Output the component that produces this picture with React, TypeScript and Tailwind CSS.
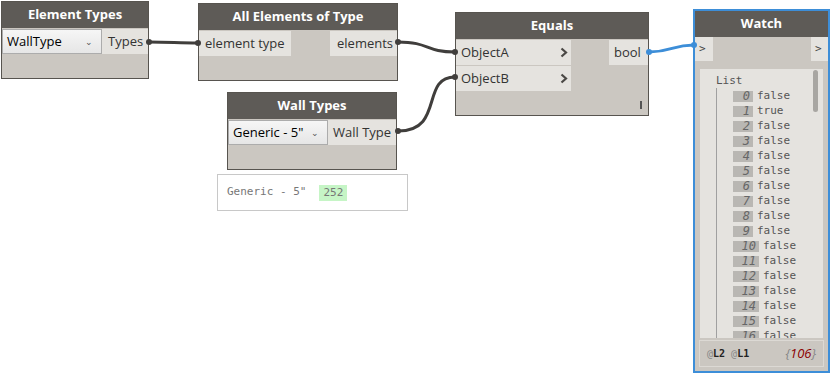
import { ReactNode } from "react";

const ui = { fontFamily: '"Open Sans", "Noto Sans", sans-serif' };
const mono = { fontFamily: '"DejaVu Sans Mono", "Liberation Mono", monospace' };

function Node({ title, className, children }: { title: string; className: string; children: ReactNode }) {
    return (
        <div className={`absolute flex flex-col border border-[#57544f] bg-[#cbc7c1] ${className}`}>
            <div className="h-[26px] shrink-0 bg-[#5e5b57] text-white font-bold text-[13px] flex items-center justify-center">{title}</div>
            {children}
        </div>
    );
}

function Dropdown({ value, width }: { value: string; width: string }) {
    return (
        <div className={`${width} h-[25px] flex items-center justify-between pl-[4px] pr-[8px] border border-[#acacac] bg-gradient-to-b from-[#f6f6f6] to-[#e6e6e6] text-[13px] text-black`}>
            <span>{value}</span>
            <span className="text-[9px] text-[#555]">&#8964;</span>
        </div>
    );
}

function Chevron() {
    return (
        <svg width="8" height="11" viewBox="0 0 8 11">
            <polyline points="1.5,1.5 6,5.5 1.5,9.5" fill="none" stroke="#4a4845" strokeWidth="2.2" />
        </svg>
    );
}

const items = ["false", "true", ...Array.from({ length: 15 }, () => "false")];

export default function App() {
    return (
        <div className="relative w-[830px] h-[376px] bg-white overflow-hidden text-[#333]" style={ui}>
            <Node title="Element Types" className="left-[1px] top-[1px] w-[148px] h-[78px]">
                <div className="flex h-[25px] mt-[1px]">
                    <Dropdown value="WallType" width="w-[100px]" />
                    <div className="flex-1 bg-[#e5e3df] text-[13px] flex items-center pl-[6px]">Types</div>
                </div>
            </Node>

            <Node title="All Elements of Type" className="left-[198px] top-[3px] w-[200px] h-[78px]">
                <div className="flex justify-between h-[25px] mt-[1px]">
                    <div className="w-[92px] bg-[#e5e3df] text-[13px] flex items-center pl-[6px]">element type</div>
                    <div className="w-[67px] bg-[#e5e3df] text-[13px] flex items-center pl-[7px]">elements</div>
                </div>
            </Node>

            <Node title="Wall Types" className="left-[227px] top-[92px] w-[170px] h-[78px]">
                <div className="flex h-[25px] mt-[1px]">
                    <Dropdown value={'Generic - 5"'} width="w-[100px]" />
                    <div className="flex-1 bg-[#e5e3df] text-[13px] flex items-center pl-[5px]">Wall Type</div>
                </div>
            </Node>

            <div className="absolute left-[217px] top-[174px] w-[191px] h-[37px] border border-[#c8c8c8] bg-white flex items-center pl-[9px] text-[11px] text-[#777]" style={mono}>
                <span>Generic - 5"</span>
                <span className="ml-[13px] px-[4px] bg-[#c6f5c6] leading-[16px]">252</span>
            </div>

            <Node title="Equals" className="left-[455px] top-[12px] w-[194px] h-[104px]">
                <div className="flex justify-between flex-1">
                    <div className="w-[115px] flex flex-col gap-[1px] pt-[1px]">
                        {["ObjectA", "ObjectB"].map((p) => (
                            <div key={p} className="h-[25px] bg-[#e5e3df] text-[13px] flex items-center justify-between pl-[5px] pr-[3px]">
                                <span>{p}</span>
                                <Chevron />
                            </div>
                        ))}
                    </div>
                    <div className="flex flex-col justify-between items-end pt-[1px] pb-[6px]">
                        <div className="w-[39px] h-[25px] bg-[#e5e3df] text-[13px] flex items-center pl-[5px]">bool</div>
                        <div className="w-[2px] h-[8px] bg-[#555] mr-[6px]" />
                    </div>
                </div>
            </Node>

            <div className="absolute left-[693px] top-[9px] w-[137px] h-[364px] border-2 border-[#3d8ed8] bg-[#cbc7c1] flex flex-col">
                <div className="h-[26px] shrink-0 bg-[#5e5b57] text-white font-bold text-[13px] flex items-center justify-center">Watch</div>
                <div className="flex justify-between h-[24px] shrink-0 text-[11px] text-[#444]" style={mono}>
                    <div className="w-[18px] bg-[#e5e3df] flex items-center pl-[4px]">&gt;</div>
                    <div className="w-[17px] bg-[#e5e3df] flex items-center pl-[4px]">&gt;</div>
                </div>
                <div className="relative mx-[5px] mt-[8px] h-[269px] bg-[#e5e3df] overflow-hidden text-[11px] text-[#555]" style={mono}>
                    <div className="absolute right-[5px] top-[1px] w-[5px] h-[42px] rounded-full bg-[#a8a6a2]" />
                    <div className="pl-[16px] pt-[5px] leading-[14px]">List</div>
                    <div className="ml-[16px] border-l border-[#a0a0a0] pl-[16px] flex flex-col gap-[1px] pt-[1px]">
                        {items.map((v, i) => (
                            <div key={i} className="flex items-center gap-[4px] h-[14px]">
                                <span className={`${i < 10 ? "w-[20px]" : "w-[26px]"} h-[11px] bg-[#b9b7b3] text-[#666] italic text-[12px] text-right pr-[3px] leading-[11px]`}>{i}</span>
                                <span>{v}</span>
                            </div>
                        ))}
                    </div>
                </div>
                <div className="mx-[4px] mt-[2px] h-[27px] border border-[#dcd9d4] flex items-center justify-between px-[7px]">
                    <span className="text-[10px] font-bold text-[#222]" style={mono}>
                        <span className="text-[#888] font-normal">@</span>L2 <span className="text-[#888] font-normal">@</span>L1
                    </span>
                    <span className="italic text-[13px] text-[#888]">{"{"}<span className="text-[#8b0000]">106</span>{"}"}</span>
                </div>
            </div>

            <svg className="absolute left-0 top-0" width="830" height="376">
                <g fill="none" stroke="#403e3c" strokeWidth="3">
                    <path d="M149 42 C170 42 178 43 198 43" />
                    <path d="M398 42 C430 42 425 52 455 52" />
                    <path d="M398 131 C445 131 420 77 455 77" />
                </g>
                <g fill="#403e3c">
                    <circle cx="149" cy="42" r="3" />
                    <circle cx="198" cy="43" r="3" />
                    <circle cx="398" cy="42" r="3" />
                    <circle cx="455" cy="52" r="3" />
                    <circle cx="398" cy="131" r="3" />
                    <circle cx="455" cy="77" r="3" />
                </g>
                <path d="M649 52 C672 52 672 45 694 45" fill="none" stroke="#3d8ed8" strokeWidth="3" />
                <circle cx="649" cy="52" r="3" fill="#3d8ed8" />
                <circle cx="694" cy="45" r="3" fill="#3d8ed8" />
            </svg>
        </div>
    );
}
